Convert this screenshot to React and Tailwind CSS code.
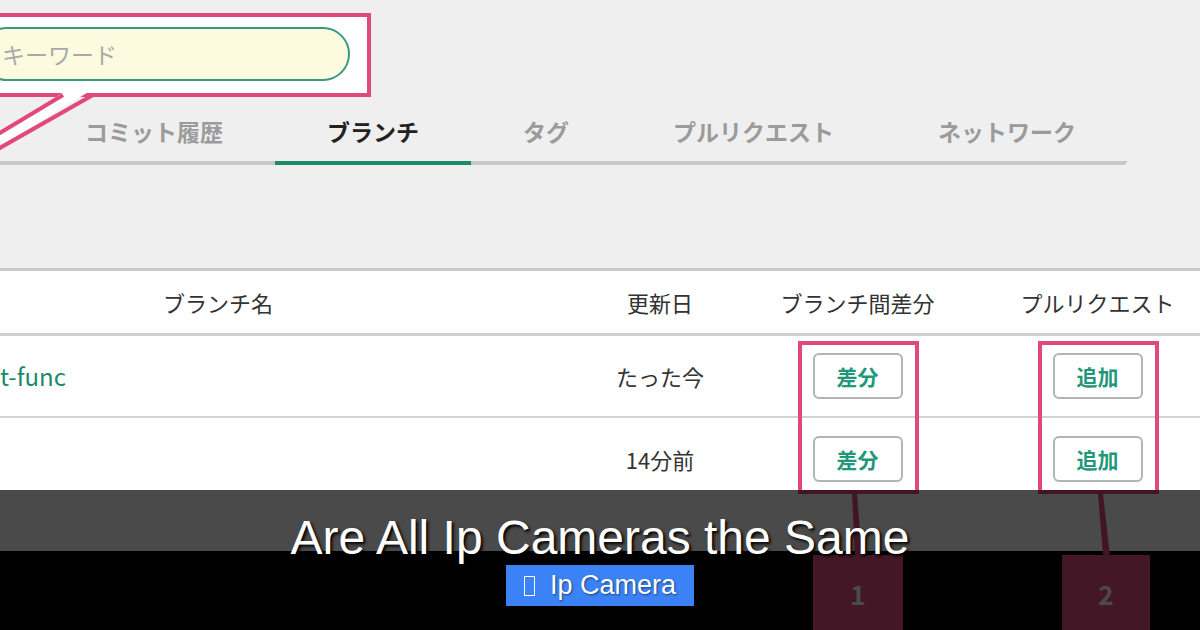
import React from 'react';

const PINK = 'border-[#e0487e]';

const tabs = [
  { label: 'コミット履歴', active: false },
  { label: 'ブランチ', active: true },
  { label: 'タグ', active: false },
  { label: 'プルリクエスト', active: false },
  { label: 'ネットワーク', active: false },
];

const rows = [
  { name: 't-func', updated: 'たった今' },
  { name: '', updated: '14分前' },
];

const ActionButton = ({ children }) => (
  <button className="w-[90px] h-[46px] rounded-[6px] border-2 border-[#b3b3b3] bg-white text-[21px] font-bold text-[#22987a] leading-none">
    {children}
  </button>
);

const App = () => {
  return (
    <div
      className="relative w-[1200px] h-[630px] overflow-hidden bg-[#efefef] flex flex-col"
      style={{ fontFamily: '"Noto Sans CJK JP", "Noto Sans", sans-serif' }}
    >
      {/* search + tabs */}
      <div className="relative h-[268px] shrink-0">
        <div className={`ml-[-40px] mt-[13px] w-[411px] h-[84px] border-4 ${PINK} bg-white pt-[10px] pr-[17px] pl-[16px]`}>
          <div className="h-[54px] rounded-full border-2 border-[#3a9a7f] bg-[#fdfbdf] flex items-center pl-[20px] text-[23px] text-[#a9a9a9]">
            キーワード
          </div>
        </div>

        {/* callout tail */}
        <svg className="absolute left-0 top-0" width="120" height="160" viewBox="0 0 120 160">
          <polygon points="65,91 90,91 0,146 0,134" fill="#ffffff" />
          <line x1="63" y1="95" x2="-2" y2="134" stroke="#e0487e" strokeWidth="4" />
          <line x1="93" y1="95" x2="-2" y2="149" stroke="#e0487e" strokeWidth="4" />
        </svg>

        <div className="w-[1127px] pl-[33px] flex border-b-4 border-[#c8c8c8] rounded-r-sm">
          {tabs.map((t) => (
            <div
              key={t.label}
              className={`px-[52px] pt-[18px] pb-[14px] text-[23px] leading-[32px] font-bold whitespace-nowrap ${
                t.active ? 'text-[#222] border-b-4 border-[#1b8b6b] -mb-1' : 'text-[#9b9b9b]'
              }`}
            >
              {t.label}
            </div>
          ))}
        </div>
      </div>

      {/* table */}
      <div className="h-[283px] shrink-0 bg-white border-t-[3px] border-[#c9c9c9] flex flex-col text-[22px] text-[#333]">
        <div className="h-[65px] shrink-0 flex items-center border-b-[3px] border-[#cfcfcf] ml-[-124px]">
          <div className="w-[684px] shrink-0 flex justify-center">ブランチ名</div>
          <div className="w-[200px] shrink-0 flex justify-center">更新日</div>
          <div className="w-[195px] shrink-0 flex justify-center whitespace-nowrap">ブランチ間差分</div>
          <div className="w-[285px] shrink-0 flex justify-center whitespace-nowrap">プルリクエスト</div>
        </div>
        {rows.map((r, i) => (
          <div
            key={i}
            className={`h-[82px] shrink-0 flex items-center ml-[-124px] ${i === 0 ? 'border-b-2 border-[#d3d3d3]' : ''}`}
          >
            <div className="w-[684px] shrink-0 pl-[124px] text-[#1a8a6a] text-[24px]">{r.name}</div>
            <div className="w-[200px] shrink-0 flex justify-center">{r.updated}</div>
            <div className="w-[195px] shrink-0 flex justify-center">
              <ActionButton>差分</ActionButton>
            </div>
            <div className="w-[285px] shrink-0 flex justify-center">
              <ActionButton>追加</ActionButton>
            </div>
          </div>
        ))}
      </div>

      {/* lower strip with numbered callouts */}
      <div className="relative flex-1 bg-black">
        <div className="absolute left-[813px] top-[4px] w-[90px] h-[90px] bg-[#e8507f] flex justify-center pt-[26px] text-[26px] font-bold text-[#ffffff] leading-none">
          1
        </div>
        <div className="absolute left-[1062px] top-[4px] w-[88px] h-[90px] bg-[#e8507f] flex justify-center pt-[26px] text-[26px] font-bold text-[#ffffff] leading-none">
          2
        </div>
      </div>

      {/* annotation boxes */}
      <div className={`absolute left-[798px] top-[341px] w-[121px] h-[153px] border-4 ${PINK}`} />
      <div className={`absolute left-[1038px] top-[341px] w-[121px] h-[153px] border-4 ${PINK}`} />
      <svg className="absolute left-0 top-0" width="1200" height="630" viewBox="0 0 1200 630">
        <polygon points="852,494 857,494 862,556 855,556" fill="#e0487e" />
        <polygon points="1098,494 1103,494 1110,556 1103,556" fill="#e0487e" />
      </svg>

      {/* caption overlay */}
      <div
        className="absolute left-0 top-[490px] w-full h-[140px] bg-black/[0.71] flex flex-col items-center pt-[24px]"
        style={{ fontFamily: '"Liberation Sans", Arial, sans-serif' }}
      >
        <div className="text-[48px] leading-[48px] text-white whitespace-nowrap [text-shadow:2px_2px_3px_#000]">
          Are All Ip Cameras the Same
        </div>
        <div className="mt-[3px] h-[41px] px-[18px] bg-[#3b82f6] flex items-center text-white text-[27px] whitespace-nowrap [text-shadow:1px_1px_2px_rgba(0,0,0,0.5)]">
          <span className="inline-block w-[11px] h-[20px] border border-white mr-[15px]" />
          Ip Camera
        </div>
      </div>
    </div>
  );
};

export default App;
